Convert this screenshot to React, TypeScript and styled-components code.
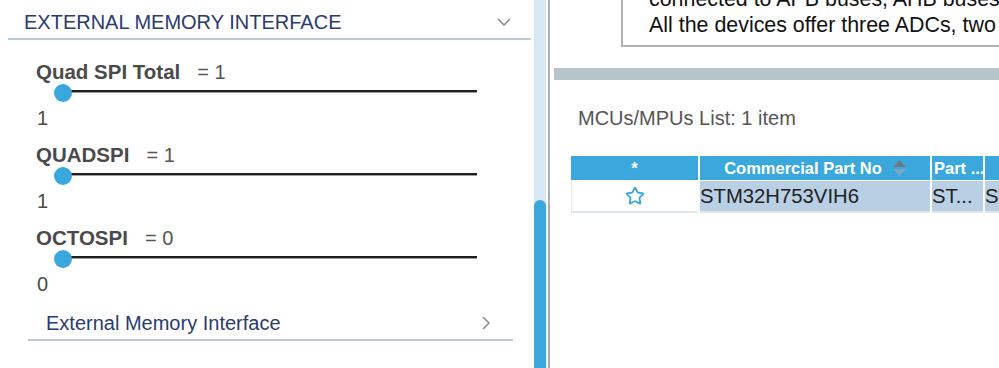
import styled, { createGlobalStyle } from "styled-components";
import { Star } from "lucide-react";

const GlobalStyle = createGlobalStyle`
  html, body {
    margin: 0;
    padding: 0;
    background: #ffffff;
    overflow: hidden;
  }
  body {
    font-family: "Liberation Sans", Arial, sans-serif;
  }
`;

// layout
const Page = styled.div`
  display: flex;
  width: 999px;
  height: 368px;
  overflow: hidden;
  background: #ffffff;
`;

const LeftPanel = styled.div`
  width: 534px;
  flex-shrink: 0;
  box-sizing: border-box;
  padding-left: 8px;
  display: flex;
  flex-direction: column;
`;

const SectionHeader = styled.div`
  width: 523px;
  height: 40px;
  box-sizing: border-box;
  padding: 6px 20px 0 16px;
  display: flex;
  align-items: center;
  justify-content: space-between;
  border-bottom: 2px solid #bccbd8;
  color: #2a3b6e;
  font-size: 20px;
`;

const Groups = styled.div`
  display: flex;
  flex-direction: column;
  gap: 13px;
  padding: 20px 0 0 28px;
`;

const Group = styled.div`
  display: flex;
  flex-direction: column;
`;

const LabelRow = styled.div`
  display: flex;
  align-items: center;
  height: 24px;
  font-size: 20px;
  color: #555555;
`;

const Label = styled.span`
  font-weight: bold;
  font-size: 20.5px;
  color: #4a4a4a;
  margin-right: 17px;
`;

const Slider = styled.div`
  position: relative;
  height: 18px;
  margin-left: 18px;
  width: 423px;
`;

const Track = styled.div`
  position: absolute;
  left: 9px;
  right: 0;
  top: 6px;
  height: 2px;
  background: #1e1e1e;
  box-shadow: 0 1px 0 #a0a0a0;
`;

const Thumb = styled.div`
  position: absolute;
  left: 0;
  top: 0;
  width: 18px;
  height: 18px;
  border-radius: 50%;
  background: #3aa8dc;
`;

const Value = styled.div`
  margin-top: 4px;
  height: 24px;
  line-height: 24px;
  font-size: 20px;
  color: #4a4a4a;
  padding-left: 1px;
`;

const SubItem = styled.div`
  margin: 15px 0 0 20px;
  width: 485px;
  box-sizing: border-box;
  padding: 0 23px 4px 18px;
  height: 30px;
  display: flex;
  align-items: center;
  justify-content: space-between;
  border-bottom: 2px solid #bccbd8;
  color: #2a3b6e;
  font-size: 20px;
`;

const ScrollTrack = styled.div`
  width: 12px;
  flex-shrink: 0;
  background: #d7e7f5;
  display: flex;
  flex-direction: column;
  justify-content: flex-end;
`;

const ScrollThumb = styled.div`
  height: 168px;
  background: #3aa8dc;
  border-radius: 6px 6px 0 0;
`;

const Divider = styled.div`
  width: 2px;
  margin-left: 2px;
  flex-shrink: 0;
  background: #a9aeb4;
`;

const RightPanel = styled.div`
  flex: 1;
  min-width: 0;
  overflow: hidden;
  display: flex;
  flex-direction: column;
`;

const DescBox = styled.div`
  margin: -16px 0 0 71px;
  width: 760px;
  box-sizing: border-box;
  border: 2px solid #b2b2b2;
  padding: 0 0 7px 26px;
  font-size: 21.4px;
  line-height: 26px;
  color: #111111;
  white-space: nowrap;
`;

const GrayBar = styled.div`
  margin: 21px 0 0 4px;
  height: 12px;
  background: #b8c4cb;
`;

const ListTitle = styled.div`
  margin: 26px 0 0 28px;
  height: 24px;
  line-height: 24px;
  font-size: 20px;
  color: #555555;
`;

const Table = styled.div`
  margin: 26px 0 0 21px;
  display: grid;
  grid-template-columns: 127px 230px 51px 140px;
  column-gap: 2px;
  row-gap: 1px;
`;

const HeadCell = styled.div<{ align?: "center" | "left" }>`
  height: 24px;
  background: #3aa8dc;
  color: #ffffff;
  font-weight: bold;
  font-size: 16.5px;
  display: flex;
  align-items: center;
  justify-content: ${(p) => (p.align === "left" ? "flex-start" : "center")};
  gap: 11px;
  padding-left: ${(p) => (p.align === "left" ? "2px" : "0")};
  white-space: nowrap;
  overflow: hidden;
`;

const BodyCell = styled.div<{ plain?: boolean }>`
  height: 32px;
  box-sizing: border-box;
  background: ${(p) => (p.plain ? "#ffffff" : "#b9cfe4")};
  border-bottom: 2px solid #e1e7ee;
  border-left: ${(p) => (p.plain ? "1px solid #e1e7ee" : "none")};
  display: flex;
  align-items: center;
  justify-content: ${(p) => (p.plain ? "center" : "flex-start")};
  font-size: 20.3px;
  color: #222222;
  white-space: nowrap;
  overflow: hidden;
`;

const ChevronDown = () => (
  <svg width="14" height="8" viewBox="0 0 14 8">
    <polyline points="1,1 7,7 13,1" fill="none" stroke="#8a8a8a" strokeWidth="1.5" />
  </svg>
);

const ChevronRight = () => (
  <svg width="8" height="14" viewBox="0 0 8 14">
    <polyline points="1,1 7,7 1,13" fill="none" stroke="#8a8a8a" strokeWidth="1.5" />
  </svg>
);

const SortIcon = () => (
  <svg width="13" height="18" viewBox="0 0 13 18">
    <polygon points="6.5,1 13,8 0,8" fill="#6c7a86" />
    <polygon points="0,10 13,10 6.5,17" fill="#7aa7c9" />
  </svg>
);

const sliders = [
  { name: "Quad SPI Total", value: 1 },
  { name: "QUADSPI", value: 1 },
  { name: "OCTOSPI", value: 0 },
];

export default function App() {
  return (
    <Page>
      <GlobalStyle />
      <LeftPanel>
        <SectionHeader>
          <span>EXTERNAL MEMORY INTERFACE</span>
          <ChevronDown />
        </SectionHeader>
        <Groups>
          {sliders.map((s) => (
            <Group key={s.name}>
              <LabelRow>
                <Label>{s.name}</Label>
                <span>= {s.value}</span>
              </LabelRow>
              <Slider>
                <Track />
                <Thumb />
              </Slider>
              <Value>{s.value}</Value>
            </Group>
          ))}
        </Groups>
        <SubItem>
          <span>External Memory Interface</span>
          <ChevronRight />
        </SubItem>
      </LeftPanel>
      <ScrollTrack>
        <ScrollThumb />
      </ScrollTrack>
      <Divider />
      <RightPanel>
        <DescBox>
          connected to APB buses, AHB buses and a 32-bit multi-AHB bus matrix.
          <br />
          All the devices offer three ADCs, two DACs, two ultra-low power comparators.
        </DescBox>
        <GrayBar />
        <ListTitle>MCUs/MPUs List: 1 item</ListTitle>
        <Table>
          <HeadCell>*</HeadCell>
          <HeadCell>
            Commercial Part No
            <SortIcon />
          </HeadCell>
          <HeadCell align="left">Part ...</HeadCell>
          <HeadCell />
          <BodyCell plain>
            <Star size={20} color="#3aa8dc" strokeWidth={2.2} />
          </BodyCell>
          <BodyCell>STM32H753VIH6</BodyCell>
          <BodyCell>ST...</BodyCell>
          <BodyCell>STM32H753VIHx</BodyCell>
        </Table>
      </RightPanel>
    </Page>
  );
}
